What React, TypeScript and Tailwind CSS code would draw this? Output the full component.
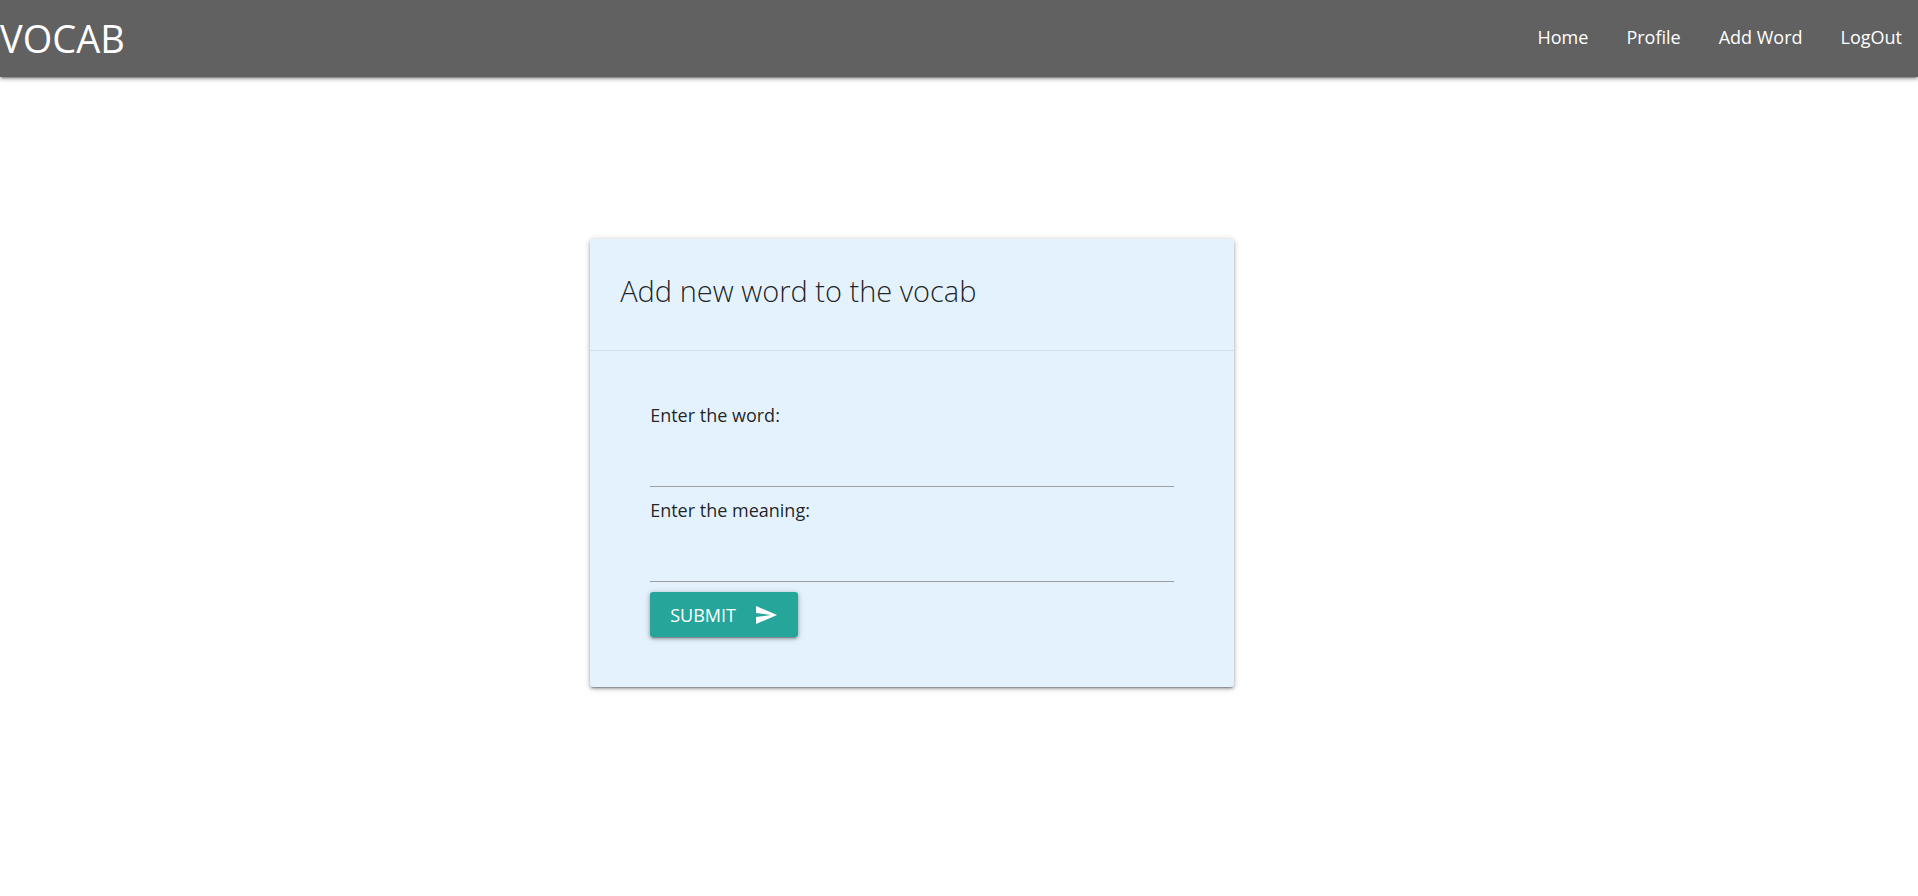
import { useState } from "react";

const links = ["Home", "Profile", "Add Word", "LogOut"];

function SendIcon() {
  return (
    <svg viewBox="0 0 24 24" className="size-6 fill-current" aria-hidden="true">
      <path d="M2.01 21L23 12 2.01 3 2 10l15 2-15 2z" />
    </svg>
  );
}

type FieldProps = {
  id: string;
  label: string;
  value: string;
  onChange: (value: string) => void;
};

function Field({ id, label, value, onChange }: FieldProps) {
  return (
    <div className="flex flex-col">
      <label htmlFor={id} className="text-lg leading-[26px]">
        {label}
      </label>
      <input
        id={id}
        type="text"
        value={value}
        onChange={(e) => onChange(e.target.value)}
        className="mb-2.5 h-[59px] w-full border-b border-[#9e9e9e] bg-transparent text-lg outline-none focus:border-[#26a69a]"
      />
    </div>
  );
}

export default function App() {
  const [word, setWord] = useState("");
  const [meaning, setMeaning] = useState("");

  return (
    <div className="min-h-screen bg-white font-['Open_Sans','Noto_Sans',sans-serif] text-black/87">
      <nav className="flex h-[77px] items-center justify-between bg-[#616161] pb-0.5 text-white shadow-[0_2px_3px_0_rgba(0,0,0,0.22),0_1px_6px_0_rgba(0,0,0,0.24),0_3px_1px_-2px_rgba(0,0,0,0.2)]">
        <a href="#" className="text-[38px] leading-none">
          VOCAB
        </a>
        <ul className="flex gap-[38px] pr-4">
          {links.map((link) => (
            <li key={link}>
              <a href="#" className="block text-lg leading-[75px]">
                {link}
              </a>
            </li>
          ))}
        </ul>
      </nav>

      <main className="mt-[162px] ml-[30.77%] w-[33.57%] rounded-[3px] bg-[#e3f2fd] shadow-[0_2px_3px_0_rgba(0,0,0,0.22),0_1px_6px_0_rgba(0,0,0,0.24),0_3px_1px_-2px_rgba(0,0,0,0.2)]">
        <header className="border-b border-[#a0a0a0]/25 px-[30px] pt-8 pb-10">
          <h1 className="text-[29px] leading-[39px] font-light">Add new word to the vocab</h1>
        </header>
        <form className="px-[60px] pt-[51px] pb-[50px]" onSubmit={(e) => e.preventDefault()}>
          <Field id="word" label="Enter the word:" value={word} onChange={setWord} />
          <Field id="meaning" label="Enter the meaning:" value={meaning} onChange={setMeaning} />
          <button
            type="submit"
            className="flex h-[45px] items-center gap-[18px] rounded-[3px] bg-[#26a69a] px-5 text-lg text-white uppercase shadow-[0_2px_3px_0_rgba(0,0,0,0.22),0_1px_6px_0_rgba(0,0,0,0.24),0_3px_1px_-2px_rgba(0,0,0,0.2)]"
          >
            Submit
            <SendIcon />
          </button>
        </form>
      </main>
    </div>
  );
}
